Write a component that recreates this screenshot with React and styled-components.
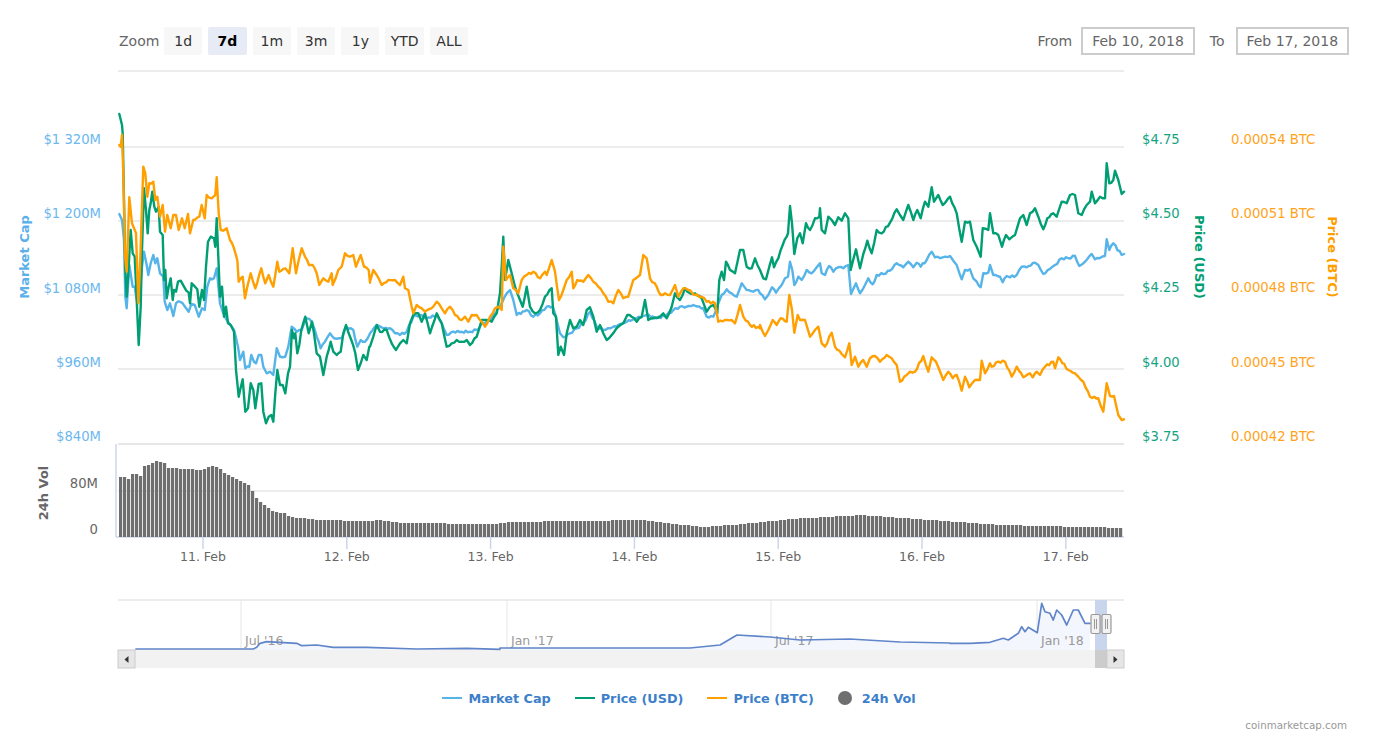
import React from 'react';
import styled, { createGlobalStyle } from 'styled-components';

const GlobalStyle = createGlobalStyle`
  html, body {
    margin: 0;
    background: #fff;
    font-family: "DejaVu Sans", Verdana, sans-serif;
  }
`;

const BLUE = '#56b4e9';
const GREEN = '#009e73';
const ORANGE = '#ff9f00';
const GREY = '#6f6f6f';

// traced curves, one block per part of the chart: [left, top, x, y, x, y...] at 3x
const blueParts = [
  [110, 100, [28,342,36,360,42,420,46,590,50,625,58,495,68,560,74,560,82,610,88,600,96,500,102,455,110,495,115,525,122,490,130,465,136,490,142,475,150,520,160,530,164,605,172,630,180,610,190,648,198,610,210,605,225,620,236,635,244,612,254,615,266,650,276,625,284,630,292,560,300,535,312,535,320,505,330,610,340,640,350,660,372,690,384,740,390,780,400,755,406,805,418,800,424,765,432,785,438,790,446,765,454,765,460,800,470,820,480,815,490,825,500,745,510,770,526,770,535,740,545,680,560,695,575,690,590,655,605,665,620,710,632,745,645,725,660,700,672,715,695,715,708,680,730,690,742,740,752,720,765,725,778,705]],
  [370, 200, [0,400,20,375,40,385,60,385,75,400,90,405,110,395,130,350,150,345,170,355,200,345,215,370,230,405,250,395,275,395,300,395,320,390,340,370,360,360,390,320,410,280,420,270,430,300,440,345,470,330,490,350,510,340,530,320,548,320,555,340,570,400,580,412,600,400,620,385,640,370,660,335,680,380,700,390,720,385,745,375,770,365,800,355,830,345,860,355,890,345,910,330,930,320,950,320,970,315,1000,325,1010,350,1030,350,1045,310,1055,285,1070,268,1085,280,1100,290,1115,250,1130,270,1150,275,1165,270]],
  [760, 150, [0,430,15,448,25,435,36,412,48,428,65,405,75,385,84,380,90,335,97,360,103,405,115,380,125,390,140,360,155,370,170,352,180,340,185,370,195,375,207,348,220,365,235,352,250,355,265,345,273,432,288,400,300,430,315,405,325,385,338,403,350,375,370,372,390,362,410,340,430,352,445,335,460,352,470,338,482,350,500,330,515,305,525,322,548,322,570,318,590,345,605,388,615,360,630,358,640,385,650,395,662,412,670,370,685,368,690,345,700,375,720,380,728,397,740,378,750,382,770,375,785,350,800,352,825,338,835,345,850,372,875,352,885,345,905,325,925,325,945,318,958,348,975,335,995,312,1005,328,1035,318,1040,268,1048,300,1060,280,1085,315,1092,312]],
];

const greenParts = [
  [110, 100, [28,42,36,75,38,100,42,300,46,510,50,590,55,520,62,390,68,460,74,470,80,600,86,735,92,620,96,450,102,265,108,330,113,400,118,330,122,310,127,275,133,320,138,335,146,320,150,395,158,405,162,540,166,510,170,595,176,560,182,535,188,600,192,570,198,575,204,545,212,542,222,560,236,578,240,610,245,550,255,560,262,568,268,620,276,570,282,600,288,500,294,425,302,410,312,415,316,440,320,355,325,470,330,590,336,560,342,650,348,620,354,670,362,675,372,695,378,810,386,890,398,838,406,935,414,925,422,850,430,870,436,925,446,852,454,850,460,935,468,970,476,950,484,945,490,965,496,880,502,810,510,855,518,855,526,880,534,820,540,800,546,690,552,715,556,700,562,760,568,735,574,690,586,650,596,700,606,665,612,700,620,760,630,770,640,825,650,770,662,725,670,755,680,765,692,755,700,700,708,675,716,700,724,720,736,760,744,810,752,790,760,765,770,780,778,740]],
  [370, 200, [0,440,10,410,20,375,30,395,50,390,65,430,78,450,90,430,100,420,110,430,120,370,130,345,145,340,155,365,165,340,180,400,200,340,215,370,230,440,245,430,260,420,275,425,290,420,300,435,320,410,335,360,350,360,365,365,380,340,390,280,395,200,400,110,405,240,415,180,425,220,435,260,450,300,458,320,470,260,480,320,495,340,510,330,525,290,545,265,550,340,558,350,565,465,572,440,582,465,590,400,600,360,610,385,620,380,630,360,640,375,650,330,660,322,670,350,680,395,690,375,700,400,710,420,725,405,745,380,760,370,772,345,785,350,800,365,815,350,825,300,835,360,850,355,870,350,880,340,890,355,905,320,915,280,930,300,945,265,960,280,975,280,995,295,1010,335,1020,320,1030,315,1042,340,1048,240,1055,215,1062,240,1068,185,1080,210,1095,220,1110,150,1120,150,1130,200,1145,205,1155,175,1170,210]],
  [760, 150, [0,360,10,385,18,388,28,350,36,322,42,352,55,325,68,285,80,260,84,250,90,168,96,220,103,312,112,265,120,250,128,280,138,220,150,240,165,205,178,200,180,175,185,240,195,250,205,200,215,210,225,225,235,202,245,212,255,190,265,205,272,360,288,298,300,355,310,312,322,272,335,310,350,240,365,250,390,218,410,178,420,195,430,210,445,165,460,210,472,180,482,205,495,155,505,170,515,112,522,155,535,135,548,165,570,140,590,190,605,275,615,215,630,215,640,270,650,290,662,320,668,235,685,240,690,190,700,250,715,255,726,290,738,255,748,268,765,255,780,205,790,195,800,225,810,190,825,175,835,200,850,238,862,205,880,190,890,200,905,155,920,160,930,135,945,135,955,190,965,195,980,165,990,155,995,125,1005,160,1020,140,1035,145,1040,40,1048,100,1060,90,1065,62,1075,90,1085,132,1092,125]],
];

const orangeParts = [
  [110, 100, [28,135,32,140,36,105,40,220,45,470,50,515,58,292,66,370,72,385,78,400,85,610,90,500,100,200,106,220,112,290,118,250,130,245,136,300,142,290,150,350,158,315,165,395,172,345,182,385,190,345,198,345,206,390,216,355,224,385,234,342,240,400,250,360,268,350,275,315,284,355,290,285,305,295,316,285,320,232,326,340,332,390,340,392,350,385,360,420,372,445,382,480,386,545,398,530,405,595,412,560,422,520,436,565,454,505,466,550,476,525,490,560,502,485,508,515,526,505,538,520,548,445,558,520,575,445,585,470,597,495,608,495,620,520,628,555,640,535,655,545,665,520,668,555,685,510,695,500,705,460,720,470,730,465,738,500,752,465,762,500,776,510,780,548]],
  [370, 200, [0,245,10,210,20,225,35,255,55,240,75,240,90,255,100,230,105,265,115,270,125,320,130,340,140,315,155,325,165,335,190,320,200,305,215,325,225,340,240,320,255,345,275,360,285,350,295,365,305,345,320,345,335,365,345,380,360,350,375,325,385,320,395,330,400,140,408,240,420,225,430,265,445,280,455,240,470,225,490,215,510,235,525,215,530,225,545,180,555,215,567,300,580,270,590,240,605,215,610,265,622,240,640,245,655,225,670,245,685,260,700,280,715,305,730,310,745,270,760,295,775,290,790,240,810,225,820,165,830,175,840,235,860,260,872,285,885,280,900,285,915,255,925,290,940,265,955,270,975,285,995,290,1010,305,1035,310,1045,365,1065,360,1085,360,1095,370,1110,315,1120,350,1140,375,1170,385]],
  [760, 150, [0,525,15,558,25,540,38,510,50,525,62,505,80,515,88,435,96,480,103,548,113,495,120,510,135,510,150,560,165,540,175,530,185,580,195,590,215,548,225,590,245,612,255,622,268,580,275,645,285,620,295,650,310,630,320,650,330,625,345,618,360,635,380,615,395,625,410,645,420,695,440,675,450,665,465,665,490,618,505,665,515,622,528,635,550,690,565,665,578,685,590,675,605,722,615,680,628,712,645,690,660,690,665,632,675,670,690,640,695,650,715,635,735,635,755,680,770,650,790,682,810,670,818,682,830,665,840,675,855,650,880,635,885,655,895,622,925,660,945,670,955,680,970,695,990,740,1015,745,1030,785,1040,700,1050,738,1062,738,1075,795,1085,810,1092,808]],
];

const navigatorParts = [
  [100, 590, [108,177,460,177,470,172,480,160,500,155,590,160,605,167,650,165,700,172,800,172,950,177,1100,175,1200,178]],
  [0, 590, [1500,174,2070,174,2100,171,2160,165,2211,135,2310,141,2400,150,2550,147,2700,156,2850,159]],
  [950, 590, [0,160,60,160,120,157,160,145,175,150,205,130,215,110,225,125,235,112,262,128,275,40,285,65,300,70,310,90,320,60,335,75,350,105,370,60,385,60,405,100,420,100]],
];

const toPoints = (parts) => {
  const out = [];
  parts.forEach(([left, top, nums]) => {
    for (let i = 0; i < nums.length; i += 2) {
      out.push([left + nums[i] / 3, top + nums[i + 1] / 3]);
    }
  });
  return out;
};

// the real series is hourly and jagged, so long flat spans get a little wobble
const roughen = (pts) => {
  const out = [];
  pts.forEach((p, i) => {
    const next = pts[i + 1];
    out.push(p);
    if (next && next[0] - p[0] > 3) {
      const steps = Math.floor((next[0] - p[0]) / 2);
      for (let s = 1; s < steps; s++) {
        const t = s / steps;
        const wobble = Math.sin(i * 12.9 + s * 78.2) * 1.1;
        out.push([p[0] + (next[0] - p[0]) * t, p[1] + (next[1] - p[1]) * t + wobble]);
      }
    }
  });
  return out;
};

const toAttr = (pts) => pts.map(([x, y]) => `${x.toFixed(1)},${y.toFixed(1)}`).join(' ');

const volumeTop = [
  [118,477],[123,477],[127,479],[130,474],[137,474],[140,477],[143,466],[148,465],[154,461],[163,463],[166,468],[187,469],[200,470],[208,466],[217,467],[222,473],[233,478],[248,485],[255,498],[263,505],[273,512],[283,513],[288,517],[300,518],[310,519],[317,520],[367,521],[377,520],[400,523],[490,524],[510,522],[640,520],[700,527],[730,525],[790,519],[860,515],[930,520],[1000,525],[1124,528],
];

const volumeAt = (x) => {
  for (let i = 1; i < volumeTop.length; i++) {
    const [x1, y1] = volumeTop[i];
    if (x <= x1) {
      const [x0, y0] = volumeTop[i - 1];
      return Math.round(y0 + ((y1 - y0) * (x - x0)) / (x1 - x0));
    }
  }
  return 528;
};

const bars = [];
for (let x = 119; x < 1123; x += 4) bars.push(x);

const rangeButtons = ['1d', '7d', '1m', '3m', '1y', 'YTD', 'ALL'];
const gridYs = [147, 221, 295, 369];
const xTicks = ['11. Feb', '12. Feb', '13. Feb', '14. Feb', '15. Feb', '16. Feb', '17. Feb'];
const leftLabels = [['$1 320M', 139], ['$1 200M', 213], ['$1 080M', 288], ['$960M', 362], ['$840M', 436]];
const usdLabels = [['$4.75', 139], ['$4.50', 213], ['$4.25', 287], ['$4.00', 362], ['$3.75', 436]];
const btcLabels = [['0.00054 BTC', 139], ['0.00051 BTC', 213], ['0.00048 BTC', 287], ['0.00045 BTC', 362], ['0.00042 BTC', 436]];
const navTicks = [[241, "Jul '16"], [507, "Jan '17"], [771, "Jul '17"], [1037, "Jan '18"]];

const navPoints = toPoints(navigatorParts);

const Page = styled.div`
  width: 1374px;
  height: 732px;
  overflow: hidden;
`;

const Toolbar = styled.div`
  display: flex;
  align-items: center;
  justify-content: space-between;
  height: 28px;
  padding: 27px 25px 0 119px;
`;

const Group = styled.div`
  display: flex;
  align-items: center;
`;

const ZoomLabel = styled.span`
  width: 45px;
  font-size: 14px;
  color: #666;
`;

const RangeButton = styled.div`
  width: 38.3px;
  height: 28px;
  margin-right: 6px;
  display: flex;
  align-items: center;
  justify-content: center;
  border-radius: 2px;
  font-size: 14px;
  background: ${(p) => (p.$active ? '#e6ebf5' : '#f7f7f7')};
  color: ${(p) => (p.$active ? '#000' : '#333')};
  font-weight: ${(p) => (p.$active ? 700 : 400)};
`;

const DateLabel = styled.span`
  font-size: 14px;
  color: #666;
  margin: 0 11px 0 15px;
  &:first-child {
    margin-right: 9px;
  }
`;

const DateBox = styled.div`
  box-sizing: border-box;
  width: 113.5px;
  height: 28px;
  display: flex;
  align-items: center;
  justify-content: center;
  border: 2px solid #ccc;
  font-size: 14px;
  color: #666;
`;

const ChartSvg = styled.svg`
  display: block;
`;

const GridLine = styled.line`
  stroke: #e6e6e6;
  stroke-width: ${(p) => p.$w || 1.5};
`;

const TickLine = styled.line`
  stroke: #ccd6eb;
  stroke-width: 1.5;
`;

const Curve = styled.polyline`
  fill: none;
  stroke: ${(p) => p.$color};
  stroke-width: ${(p) => p.$w || 2.4};
  stroke-linejoin: round;
  stroke-linecap: round;
`;

const AxisText = styled.text`
  font-family: "DejaVu Sans", Verdana, sans-serif;
  font-size: ${(p) => p.$size || 13.2}px;
  fill: ${(p) => p.$color || '#666'};
  dominant-baseline: central;
`;

const AxisTitle = styled.text`
  font-family: "DejaVu Sans", Verdana, sans-serif;
  font-size: 13px;
  font-weight: 700;
  fill: ${(p) => p.$color};
  text-anchor: middle;
  dominant-baseline: central;
`;

const VolumeBar = styled.rect`
  fill: ${GREY};
`;

const NavLabel = styled.text`
  font-family: "DejaVu Sans", Verdana, sans-serif;
  font-size: 12.5px;
  fill: #999;
  dominant-baseline: central;
`;

const Legend = styled.div`
  display: flex;
  justify-content: center;
  align-items: center;
  gap: 24px;
  height: 20px;
  padding-right: 16px;
`;

const LegendItem = styled.div`
  display: flex;
  align-items: center;
  gap: ${(p) => (p.$dot ? '10px' : '6px')};
  font-size: 12.8px;
  font-weight: 700;
  color: #3d7fc9;
`;

const LegendLine = styled.span`
  width: 20px;
  height: 2px;
  background: ${(p) => p.$color};
`;

const LegendDot = styled.span`
  width: 14px;
  height: 14px;
  border-radius: 50%;
  background: ${GREY};
`;

const Credit = styled.div`
  margin-top: 11px;
  padding-right: 27px;
  text-align: right;
  font-size: 10.3px;
  line-height: 13px;
  color: #999;
`;

export default function App() {
  const navArea = `118,650 ${toAttr(navPoints)} 1090,650`;

  return (
    <Page>
      <GlobalStyle />
      <Toolbar>
        <Group>
          <ZoomLabel>Zoom</ZoomLabel>
          {rangeButtons.map((b) => (
            <RangeButton key={b} $active={b === '7d'}>{b}</RangeButton>
          ))}
        </Group>
        <Group>
          <DateLabel>From</DateLabel>
          <DateBox>Feb 10, 2018</DateBox>
          <DateLabel>To</DateLabel>
          <DateBox>Feb 17, 2018</DateBox>
        </Group>
      </Toolbar>

      <ChartSvg width="1374" height="633" viewBox="0 55 1374 633">
        <GridLine x1="118" x2="1124" y1="71" y2="71" />
        {gridYs.map((y) => (
          <GridLine key={y} x1="118" x2="1124" y1={y} y2={y} />
        ))}
        <GridLine x1="118" x2="1124" y1="444" y2="444" $w={2} />
        <GridLine x1="118" x2="1124" y1="491" y2="491" />

        {leftLabels.map(([t, y]) => (
          <AxisText key={t} x="101" y={y} textAnchor="end" $color="#6cb8ee">{t}</AxisText>
        ))}
        {usdLabels.map(([t, y]) => (
          <AxisText key={t} x="1142" y={y} $color="#14a37f">{t}</AxisText>
        ))}
        {btcLabels.map(([t, y]) => (
          <AxisText key={t} x="1231" y={y} $color="#ffa31a">{t}</AxisText>
        ))}
        <AxisTitle x="24" y="257" transform="rotate(-90 24 257)" $color="#5cb0ea">Market Cap</AxisTitle>
        <AxisTitle x="1199" y="257" transform="rotate(90 1199 257)" $color={GREEN}>Price (USD)</AxisTitle>
        <AxisTitle x="1332" y="257" transform="rotate(90 1332 257)" $color={ORANGE}>Price (BTC)</AxisTitle>
        <AxisTitle x="43" y="493" transform="rotate(-90 43 493)" $color="#666">24h Vol</AxisTitle>

        <Curve points={toAttr(roughen(toPoints(blueParts)))} $color={BLUE} />
        <Curve points={toAttr(roughen(toPoints(greenParts)))} $color={GREEN} />
        <Curve points={toAttr(roughen(toPoints(orangeParts)))} $color={ORANGE} />

        <AxisText x="98" y="483" textAnchor="end">80M</AxisText>
        <AxisText x="98" y="529" textAnchor="end">0</AxisText>
        <TickLine x1="116" x2="116" y1="444" y2="537" />
        <TickLine x1="116" x2="1124" y1="537" y2="537" />
        {bars.map((x) => {
          const top = volumeAt(x);
          return <VolumeBar key={x} x={x} y={top} width="3.2" height={537 - top} />;
        })}
        {xTicks.map((t, i) => {
          const x = 203 + i * 143.8;
          return (
            <g key={t}>
              <TickLine x1={x} x2={x} y1="537" y2="549" />
              <AxisText x={x} y="556" textAnchor="middle" $size={12.5}>{t}</AxisText>
            </g>
          );
        })}

        <GridLine x1="118" x2="1124" y1="600" y2="600" />
        {navTicks.map(([x, t]) => (
          <GridLine key={t} x1={x} x2={x} y1="600" y2="650" $w={1} />
        ))}
        <polygon points={navArea} fill="#f3f6fd" />
        <rect x="1095" y="600" width="12" height="50" fill="#c9d5ea" />
        <rect x="118" y="650" width="1006" height="18" fill="#f2f2f2" />
        <rect x="1095" y="650" width="12" height="18" fill="#ccc" />
        <rect x="118" y="650" width="17" height="18" fill="#e6e6e6" stroke="#ccc" />
        <rect x="1107" y="650" width="17" height="18" fill="#e6e6e6" stroke="#ccc" />
        <path d="M128.5 656v7l-4-3.5z" fill="#333" />
        <path d="M1113.5 656v7l4-3.5z" fill="#333" />
        {navTicks.map(([x, t]) => (
          <NavLabel key={t} x={x + 4} y="640">{t}</NavLabel>
        ))}
        <Curve points={toAttr(navPoints)} $color="#6085c9" $w={1.7} />
        {[1091, 1102].map((x) => (
          <g key={x}>
            <rect x={x} y="614.5" width="9" height="19" rx="1.5" fill="#f2f2f2" stroke="#999" strokeWidth="1.2" />
            <path d={`M${x + 3.5} 619v10M${x + 5.5} 619v10`} stroke="#999" fill="none" />
          </g>
        ))}
      </ChartSvg>

      <Legend>
        <LegendItem><LegendLine $color={BLUE} />Market Cap</LegendItem>
        <LegendItem><LegendLine $color={GREEN} />Price (USD)</LegendItem>
        <LegendItem><LegendLine $color={ORANGE} />Price (BTC)</LegendItem>
        <LegendItem $dot><LegendDot />24h Vol</LegendItem>
      </Legend>
      <Credit>coinmarketcap.com</Credit>
    </Page>
  );
}
